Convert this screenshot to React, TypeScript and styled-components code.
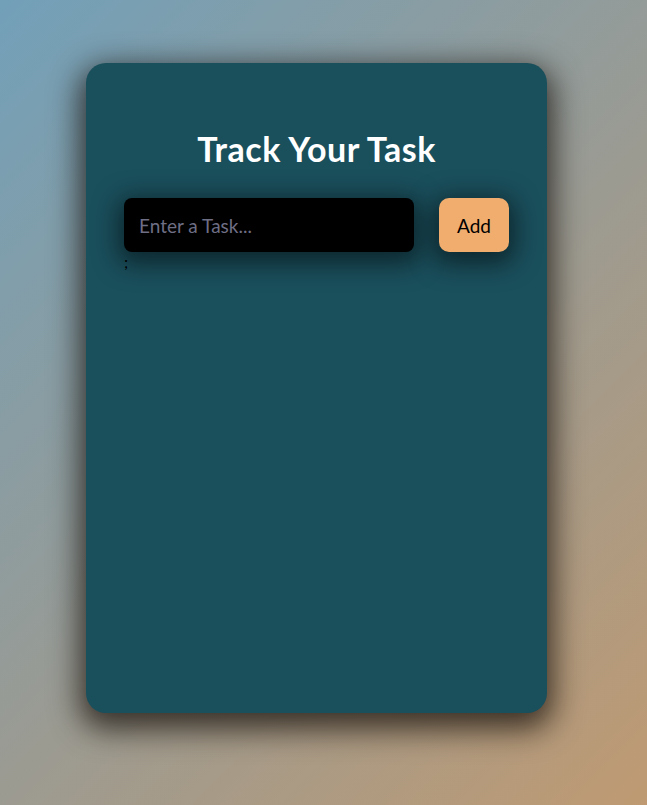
import React from "react";
import styled, { createGlobalStyle } from "styled-components";

const Global = createGlobalStyle`
  html, body { margin: 0; padding: 0; }
  body {
    min-height: 805px;
    background: linear-gradient(135deg, #72a0b9 0%, #989b95 50%, #bf9a72 100%);
    font-family: "Gill Sans", "Gill Sans MT", Lato, "Liberation Sans", sans-serif;
    overflow: hidden;
  }
`;

const Page = styled.main`
  display: flex;
  justify-content: center;
  padding: 63px 14px 0 0;
  min-height: 805px;
  box-sizing: border-box;
`;

const Card = styled.section`
  width: 461px;
  height: 650px;
  box-sizing: border-box;
  background: #1a4f5c;
  border-radius: 20px;
  box-shadow: 0 10px 30px 6px rgba(20, 14, 8, 0.75);
  padding: 66px 38px 0;
  display: flex;
  flex-direction: column;
`;

const Title = styled.h1`
  margin: 0 0 29px;
  text-align: center;
  color: #ffffff;
  font-size: 34px;
  letter-spacing: 0.5px;
  font-weight: 700;
  line-height: 40px;
`;

const Row = styled.div`
  display: flex;
  gap: 25px;
  align-items: stretch;
`;

const Input = styled.input`
  flex: 1;
  height: 54px;
  box-sizing: border-box;
  border: none;
  outline: none;
  border-radius: 8px;
  background: #000;
  color: #fff;
  padding: 0 15px;
  font-family: inherit;
  font-size: 19px;
  box-shadow: 0 6px 24px 6px rgba(0, 0, 0, 0.5);
  &::placeholder { color: #6e6e85; }
`;

const AddButton = styled.button`
  width: 70px;
  height: 54px;
  border: none;
  border-radius: 10px;
  background: #f0ad6e;
  color: #000;
  font-family: inherit;
  font-size: 19px;
  cursor: pointer;
  box-shadow: 0 6px 24px 6px rgba(0, 0, 0, 0.5);
`;

const Semi = styled.div`
  color: #000;
  font-size: 16px;
  line-height: 20px;
`;

export default function App() {
  return (
    <>
      <Global />
      <Page>
        <Card>
          <Title>Track Your Task</Title>
          <Row>
            <Input placeholder="Enter a Task..." />
            <AddButton>Add</AddButton>
          </Row>
          <Semi>;</Semi>
        </Card>
      </Page>
    </>
  );
}
